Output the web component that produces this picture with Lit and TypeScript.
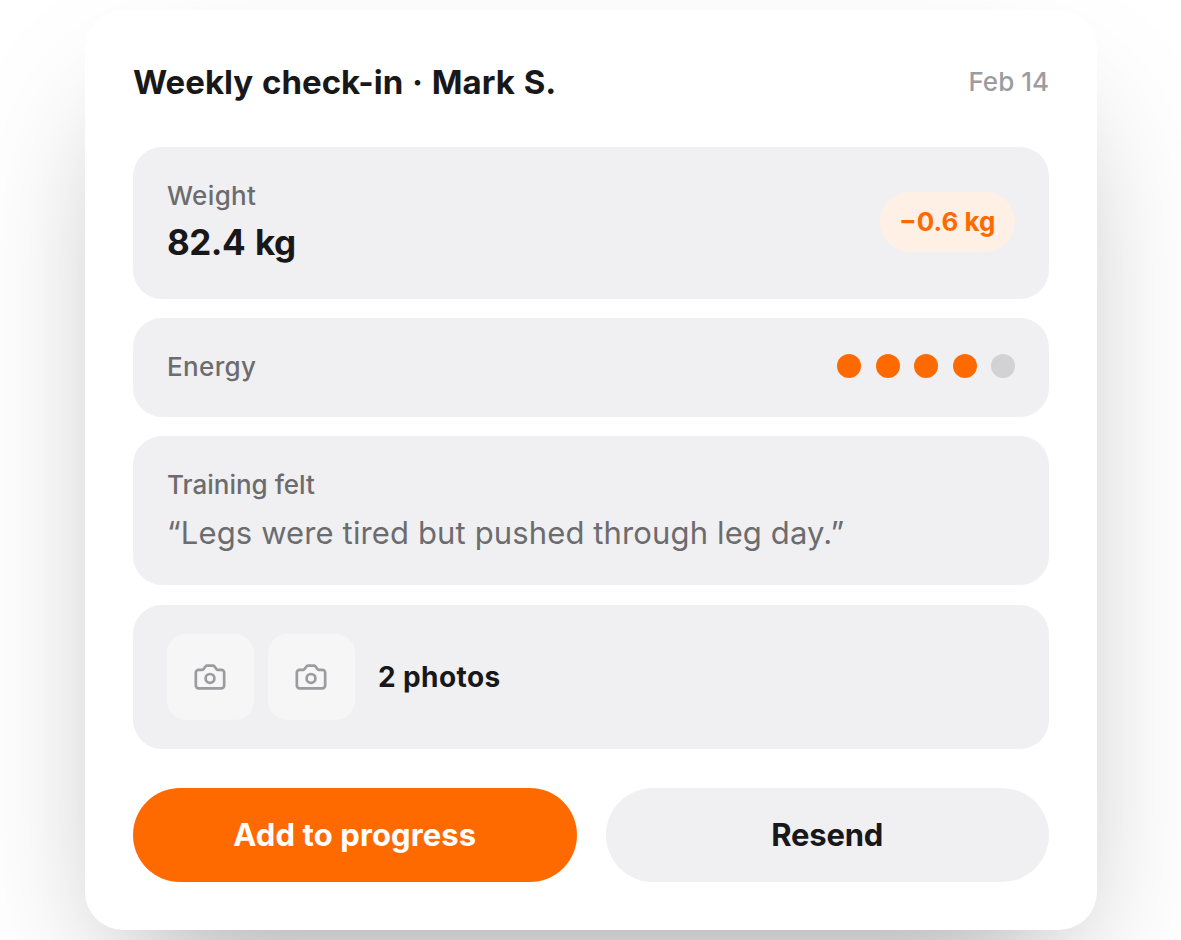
import { LitElement, html, css } from 'lit';
import { customElement, property } from 'lit/decorators.js';


@customElement('photo-tile')
export class PhotoTile extends LitElement {
  static styles = css`
    :host {
      display: flex;
      align-items: center;
      justify-content: center;
      width: 86.5px;
      height: 86.5px;
      border-radius: 19px;
      background: #f6f6f6;
      color: #9c9ca0;
    }
    svg {
      display: block;
      width: 34px;
      height: 34px;
    }
  `;

  render() {
    return html`
      <svg viewBox="0 0 24 24" fill="none" stroke="currentColor" stroke-width="1.9" stroke-linecap="round" stroke-linejoin="round">
        <path d="M14 4h-4a1.6 1.6 0 0 0-1.2.6L7.4 6.4A1.6 1.6 0 0 1 6.2 7H4a2 2 0 0 0-2 2v9a2 2 0 0 0 2 2h16a2 2 0 0 0 2-2V9a2 2 0 0 0-2-2h-2.2a1.6 1.6 0 0 1-1.2-.6l-1.4-1.8A1.6 1.6 0 0 0 14 4z" />
        <circle cx="12" cy="13" r="3.1" />
      </svg>
    `;
  }
}

@customElement('energy-dots')
export class EnergyDots extends LitElement {
  static styles = css`
    :host {
      display: flex;
      gap: 14.5px;
      padding-bottom: 2px;
    }
    .dot {
      width: 24px;
      height: 24px;
      border-radius: 50%;
      background: #d2d2d2;
    }
    .dot.on {
      background: #ff6a00;
    }
  `;

  @property({ type: Number })
  value: number = 0;

  @property({ type: Number })
  max: number = 5;

  render() {
    return html`
      ${Array.from({ length: this.max }, (_, i) => html`<span class="dot ${i < this.value ? 'on' : ''}"></span>`)}
    `;
  }
}

@customElement('app-root')
export class AppRoot extends LitElement {
  static styles = css`
    :host {
      display: block;
      box-sizing: border-box;
      height: 940px;
      padding: 9.5px 84px 0 85px;
      overflow: hidden;
      background: #fff;
      color: #18181a;
      font-family: Inter, 'Liberation Sans', sans-serif;
      white-space: nowrap;
    }
    .card {
      box-sizing: border-box;
      height: 920.5px;
      padding: 48px;
      border-radius: 38px;
      background: #fff;
      box-shadow: 0 70px 140px -48px rgba(0, 0, 0, 0.37);
    }
    header {
      display: flex;
      justify-content: space-between;
      align-items: center;
      height: 48px;
      margin-bottom: 41.5px;
    }
    h1 {
      margin: 0;
      font-size: 33px;
      font-weight: 650;
      letter-spacing: 0;
      word-spacing: 1px;
    }
    .date {
      font-size: 26px;
      font-weight: 500;
      color: #9c9ca0;
    }
    .rows {
      display: flex;
      flex-direction: column;
      gap: 19.5px;
    }
    .row {
      box-sizing: border-box;
      display: flex;
      align-items: center;
      justify-content: space-between;
      padding: 0 34px;
      border-radius: 29px;
      background: #f0f0f2;
    }
    .weight {
      height: 151.5px;
      padding-bottom: 1.5px;
    }
    .weight .label,
    .energy .label {
      letter-spacing: 0.35px;
    }
    .energy {
      height: 98.5px;
    }
    .training {
      height: 149px;
    }
    .photos {
      height: 144.5px;
      justify-content: flex-start;
      gap: 14.5px;
    }
    .label {
      font-size: 26px;
      line-height: 32px;
      font-weight: 500;
      color: #6c6c6f;
    }
    .amount {
      margin-top: 10px;
      padding-bottom: 2px;
      font-size: 35px;
      line-height: 40px;
      font-weight: 700;
      letter-spacing: -0.5px;
      word-spacing: 2px;
    }
    .quote {
      margin-top: 13px;
      font-size: 31px;
      line-height: 38px;
      letter-spacing: 0.13px;
      color: #6c6c6f;
    }
    .delta {
      display: flex;
      align-items: center;
      justify-content: center;
      box-sizing: border-box;
      width: 135.5px;
      height: 60.5px;
      padding-bottom: 1px;
      border-radius: 31px;
      background: #fff0e5;
      color: #ff6a00;
      font-size: 26px;
      font-weight: 700;
    }
    .count {
      margin-left: 9px;
      font-size: 28px;
      font-weight: 650;
      letter-spacing: 0.4px;
    }
    .actions {
      display: grid;
      grid-template-columns: 1fr 1fr;
      gap: 29px;
      margin-top: 39px;
    }
    button {
      height: 94px;
      padding: 0 0 2px;
      border: 0;
      border-radius: 47px;
      background: #f0f0f2;
      color: #18181a;
      font: inherit;
      font-size: 31px;
      font-weight: 650;
      letter-spacing: -0.2px;
    }
    .primary {
      background: #ff6a00;
      color: #fff;
      font-weight: 700;
      letter-spacing: 0.1px;
    }
  `;

  @property({ type: Number })
  energy: number = 4;

  render() {
    return html`
      <section class="card">
        <header>
          <h1>Weekly check-in · Mark S.</h1>
          <span class="date">Feb 14</span>
        </header>
        <div class="rows">
          <div class="row weight">
            <div>
              <div class="label">Weight</div>
              <div class="amount">82.4 kg</div>
            </div>
            <span class="delta">−0.6 kg</span>
          </div>
          <div class="row energy">
            <span class="label">Energy</span>
            <energy-dots .value=${this.energy}></energy-dots>
          </div>
          <div class="row training">
            <div>
              <div class="label">Training felt</div>
              <div class="quote">“Legs were tired but pushed through leg day.”</div>
            </div>
          </div>
          <div class="row photos">
            <photo-tile></photo-tile>
            <photo-tile></photo-tile>
            <span class="count">2 photos</span>
          </div>
        </div>
        <div class="actions">
          <button class="primary">Add to progress</button>
          <button>Resend</button>
        </div>
      </section>
    `;
  }
}

declare global {
  interface HTMLElementTagNameMap {
    'photo-tile': PhotoTile;
    'energy-dots': EnergyDots;
    'app-root': AppRoot;
  }
}
